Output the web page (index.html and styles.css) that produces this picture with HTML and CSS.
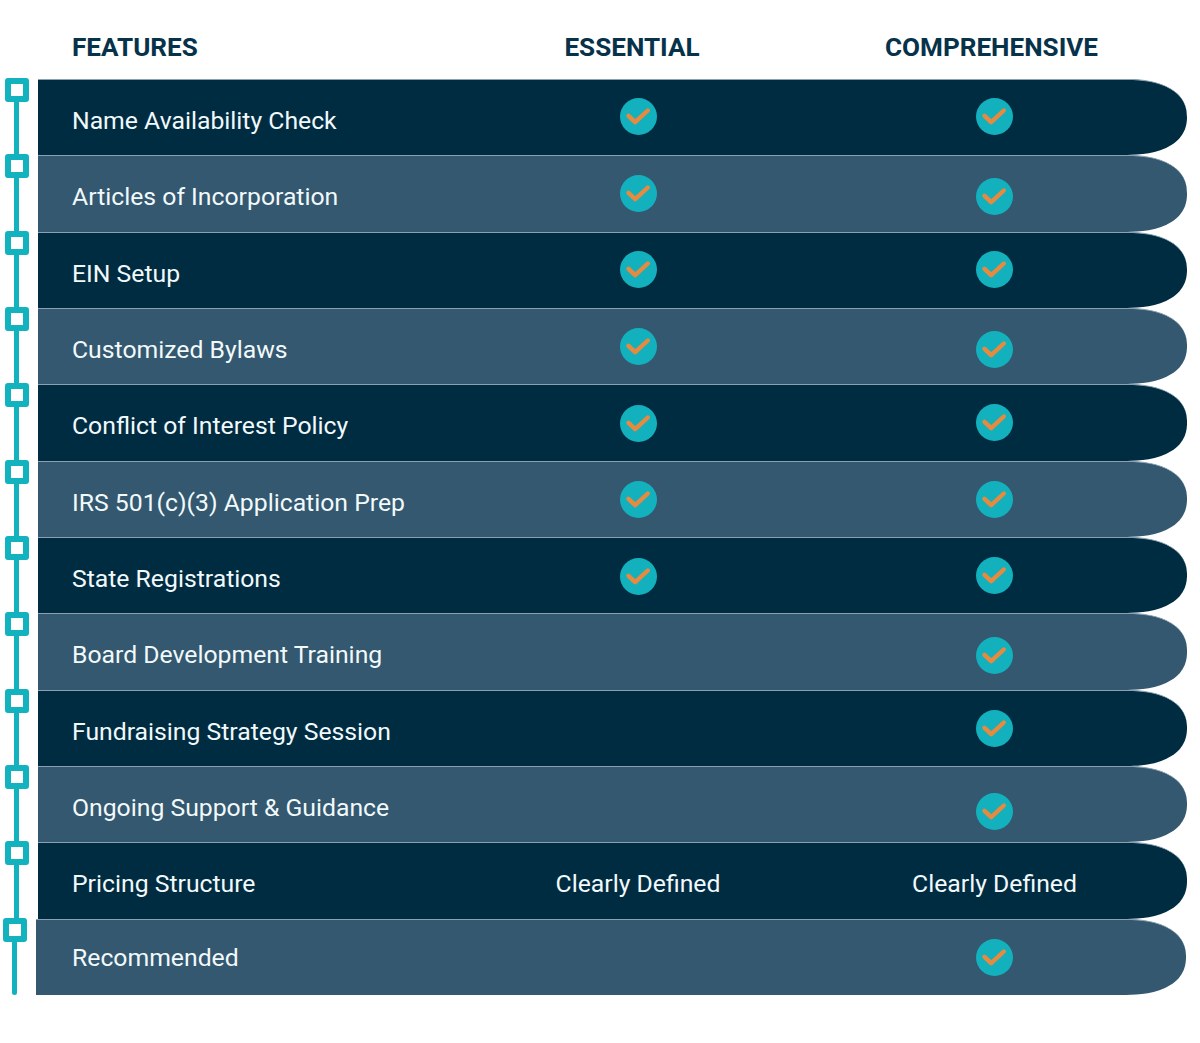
FILE: index.html
```html
<!DOCTYPE html>
<html lang="en">
<head>
<meta charset="utf-8">
<title>Features comparison</title>
<link rel="stylesheet" href="styles.css">
</head>
<body>
<svg class="defs" width="0" height="0" aria-hidden="true"><symbol id="check" viewBox="0 0 37 37"><circle cx="18.5" cy="18.5" r="18.5" fill="#12b1bd"/><path d="M8.5 17.8 15.2 24.2 27.8 12.5" fill="none" stroke="#e58a3f" stroke-width="4.4" stroke-linecap="round" stroke-linejoin="round"/></symbol></svg>
<main class="page">
  <header class="head">
    <div class="h-feat">FEATURES</div>
    <div class="h-ess">ESSENTIAL</div>
    <div class="h-comp">COMPREHENSIVE</div>
  </header>
  <section class="table">
    <div class="row"><div class="rail"><span class="node"></span><span class="line"></span></div><div class="bar dark"><div class="name">Name Availability Check</div><div class="cell"><svg class="tick up"><use href="#check"/></svg></div><div class="cell"><svg class="tick up"><use href="#check"/></svg></div></div></div>
    <div class="row"><div class="rail"><span class="node"></span><span class="line"></span></div><div class="bar light"><div class="name">Articles of Incorporation</div><div class="cell"><svg class="tick"><use href="#check"/></svg></div><div class="cell"><svg class="tick low"><use href="#check"/></svg></div></div></div>
    <div class="row"><div class="rail"><span class="node"></span><span class="line"></span></div><div class="bar dark"><div class="name">EIN Setup</div><div class="cell"><svg class="tick up1"><use href="#check"/></svg></div><div class="cell"><svg class="tick up"><use href="#check"/></svg></div></div></div>
    <div class="row"><div class="rail"><span class="node"></span><span class="line"></span></div><div class="bar light"><div class="name">Customized Bylaws</div><div class="cell"><svg class="tick"><use href="#check"/></svg></div><div class="cell"><svg class="tick low"><use href="#check"/></svg></div></div></div>
    <div class="row"><div class="rail"><span class="node"></span><span class="line"></span></div><div class="bar dark"><div class="name">Conflict of Interest Policy</div><div class="cell"><svg class="tick down"><use href="#check"/></svg></div><div class="cell"><svg class="tick"><use href="#check"/></svg></div></div></div>
    <div class="row"><div class="rail"><span class="node"></span><span class="line"></span></div><div class="bar light"><div class="name">IRS 501(c)(3) Application Prep</div><div class="cell"><svg class="tick"><use href="#check"/></svg></div><div class="cell"><svg class="tick"><use href="#check"/></svg></div></div></div>
    <div class="row"><div class="rail"><span class="node"></span><span class="line"></span></div><div class="bar dark"><div class="name">State Registrations</div><div class="cell"><svg class="tick down"><use href="#check"/></svg></div><div class="cell"><svg class="tick"><use href="#check"/></svg></div></div></div>
    <div class="row"><div class="rail"><span class="node"></span><span class="line"></span></div><div class="bar light"><div class="name">Board Development Training</div><div class="cell"></div><div class="cell"><svg class="tick low2"><use href="#check"/></svg></div></div></div>
    <div class="row"><div class="rail"><span class="node"></span><span class="line"></span></div><div class="bar dark"><div class="name">Fundraising Strategy Session</div><div class="cell"></div><div class="cell"><svg class="tick"><use href="#check"/></svg></div></div></div>
    <div class="row"><div class="rail"><span class="node"></span><span class="line"></span></div><div class="bar light"><div class="name">Ongoing Support &amp; Guidance</div><div class="cell"></div><div class="cell"><svg class="tick lower"><use href="#check"/></svg></div></div></div>
    <div class="row"><div class="rail"><span class="node"></span><span class="line"></span></div><div class="bar dark"><div class="name">Pricing Structure</div><div class="cell txt">Clearly Defined</div><div class="cell txt">Clearly Defined</div></div></div>
    <div class="row row-last"><div class="rail"><span class="node"></span><span class="line line-end"></span></div><div class="bar light"><div class="name flat">Recommended</div><div class="cell"></div><div class="cell"><svg class="tick"><use href="#check"/></svg></div></div></div>
  </section>
</main>
</body>
</html>
```
FILE: styles.css
```css
* { box-sizing: border-box; }
html, body { margin: 0; padding: 0; background: #fff; }
body { font-family: Roboto, "Liberation Sans", sans-serif; height: 1043px; overflow: hidden; }
.defs { display: block; height: 0; }
.page { display: flex; flex-direction: column; }
.head {
  height: 79px;
  padding: 15px 0 0 72px;
  display: grid;
  grid-template-columns: 388px 356px 357px;
  align-items: center;
  color: #06324a;
  font-size: 26.1px;
  font-weight: 700;
}
.h-ess { text-align: center; padding-right: 12px; }
.h-comp { text-align: center; padding-right: 6px; }
.table { display: grid; grid-auto-rows: 76.33px; }
.row { display: flex; }
.rail { width: 38px; flex: none; margin-top: -1px; padding-left: 5px; display: flex; flex-direction: column; align-items: flex-start; }
.node {
  width: 24px; height: 24px; flex: none;
  border: 6px solid #12b2be; border-radius: 3px; background: #fff;
}
.line { width: 5px; flex: 1; margin-left: 9px; background: #12b2be; }
.line-end { border-radius: 0 0 3px 3px; }
.bar {
  flex: none;
  width: 1149px;
  display: grid;
  grid-template-columns: 422px 356px 357px;
  align-items: center;
  border-top: 1px solid #8ba1af;
  border-radius: 0 60px 60px 0 / 0 38px 38px 0;
  corner-shape: superellipse(1.2);
  color: #f2f9fb;
  font-size: 24.75px;
}
.dark { background: #002c42; }
.light { background: #33586f; }
.name { padding: 6px 0 0 34px; white-space: nowrap; }
.name.flat { padding-top: 0; }
.cell { display: flex; justify-content: center; align-items: center; }
.txt { padding-top: 6px; white-space: nowrap; }
.tick { width: 37px; height: 37px; display: block; }
.up { margin-bottom: 2px; }
.up1 { margin-bottom: 1px; }
.down { margin-top: 1px; }
.low { margin-top: 6px; }
.low2 { margin-top: 8px; }
.lower { margin-top: 14px; }
.row-last { margin-left: -2px; }
.row-last .bar { width: 1150px; grid-template-columns: 424px 356px 357px; }
.row-last .name { padding-left: 36px; }
```
